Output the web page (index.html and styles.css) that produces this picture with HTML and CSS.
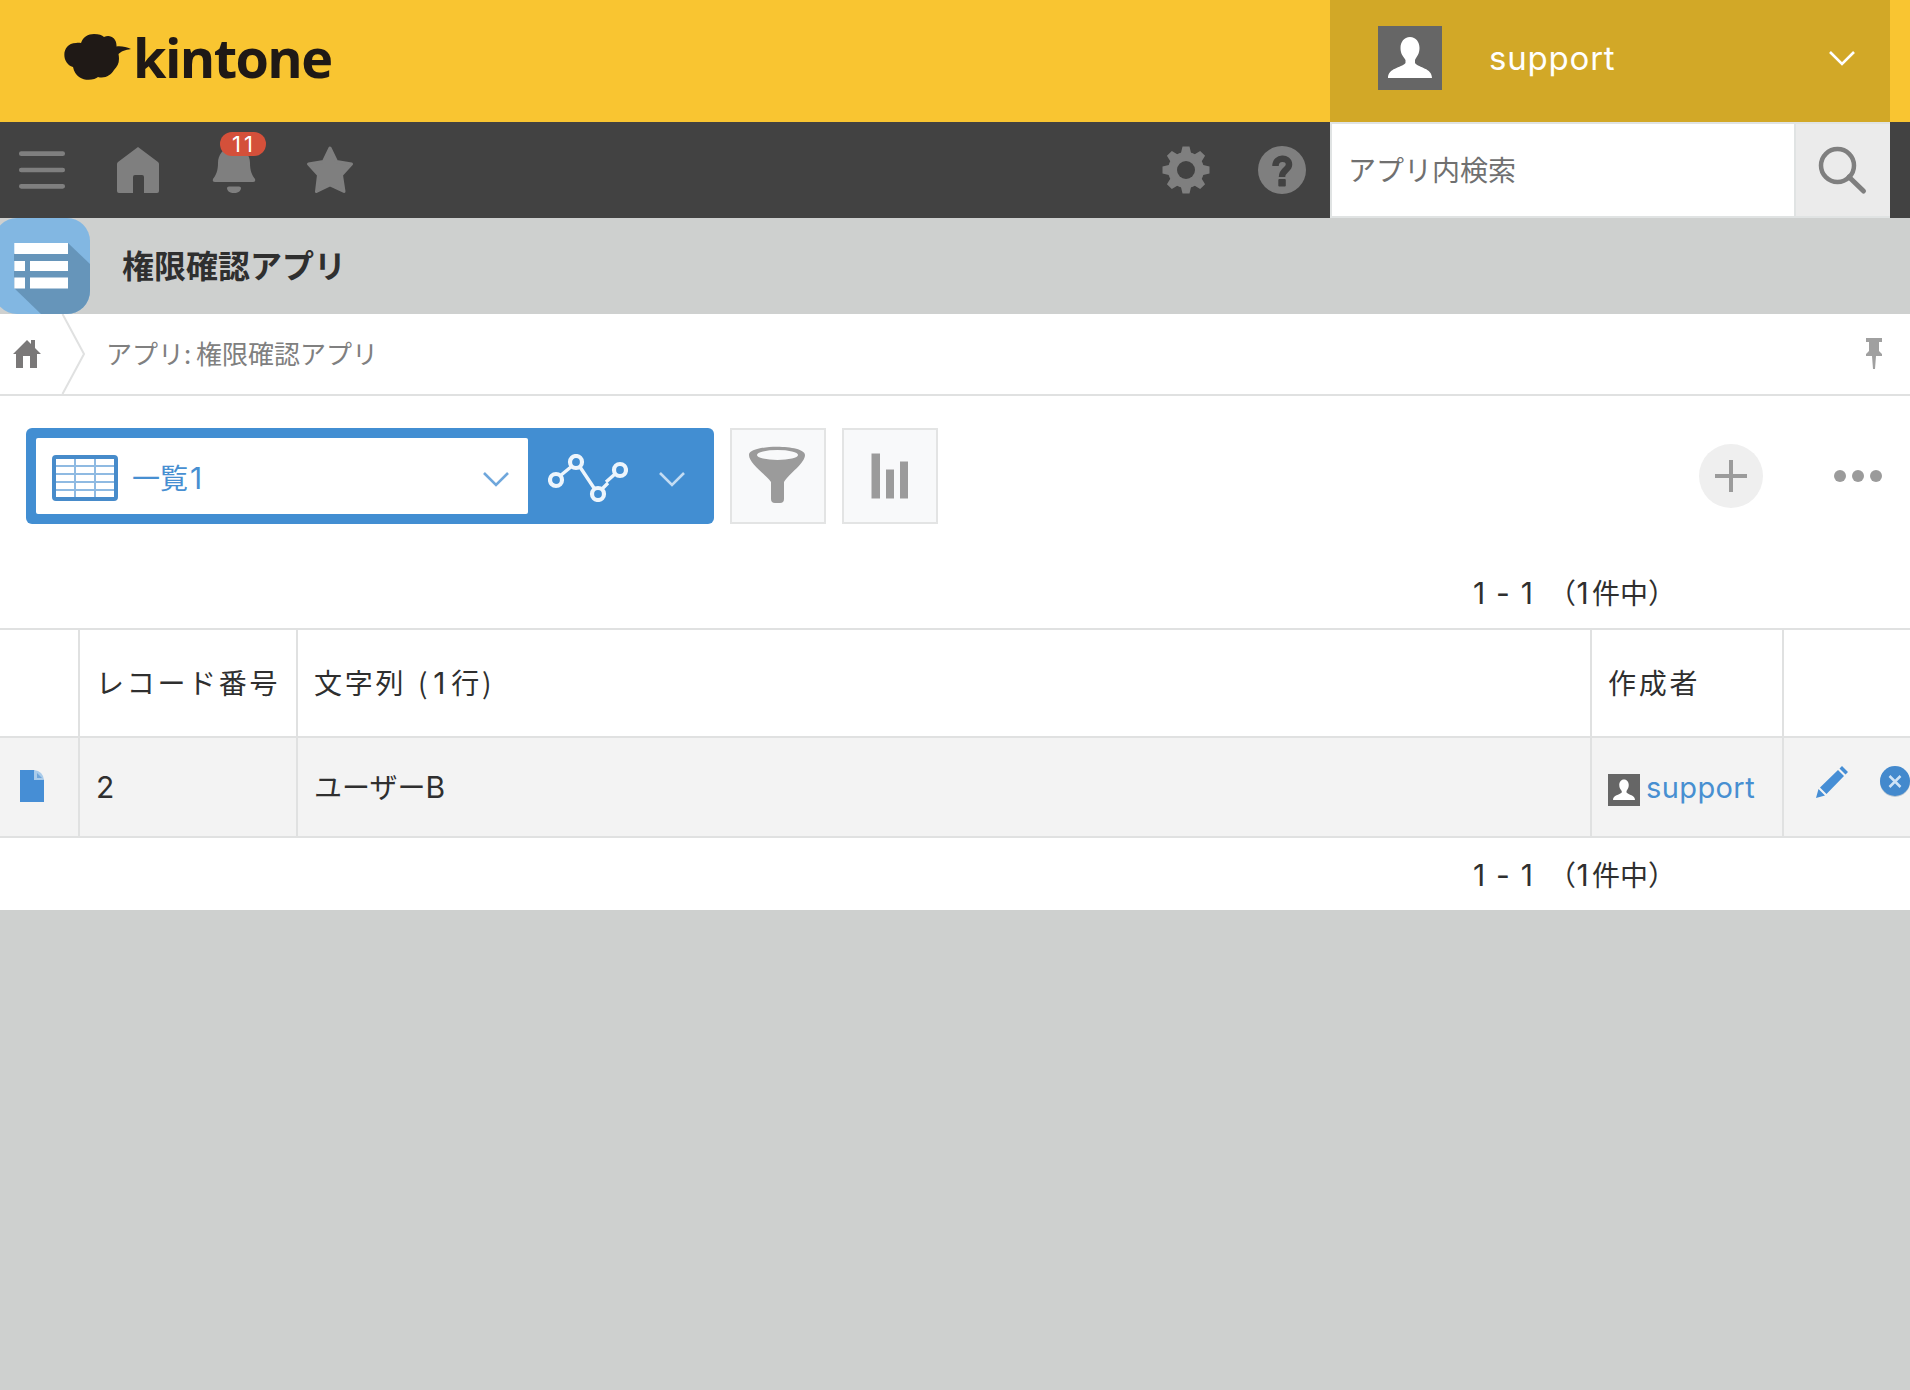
FILE: index.html
```html
<!DOCTYPE html>
<html lang="ja">
<head>
    <meta charset="UTF-8">
    <meta name="viewport" content="width=device-width, initial-scale=1.0">
    <title>権限確認アプリ</title>
    <link rel="stylesheet" href="styles.css">
</head>
<body>
    <!-- Header -->
    <header class="header">
        <div class="logo">
            <svg width="68" height="48" viewBox="0 0 68 48">
                <path d="M17 10C19 4 24 1 30 1C35 1 38 2 40 4C46 1 53 5 52.500 13.500C58 13 62 14 67 16C61 17 58 18 54.500 21C56 29 54 33 50 37C47 42 41 46 34 44C30 48 12 50 9 34C-3 31 -3 10 12 10C14 9.500 15 9.500 17 10Z" fill="#1f1916"/>
            </svg>
            <span class="logo-text">kintone</span>
        </div>
        <div class="user">
            <svg class="avatar" viewBox="0 0 64 64">
                <rect width="64" height="64" fill="#666"/>
                <path d="M32 11C26 11 22.500 16 22.500 22C22.500 28 25 30 27.500 34V37C23 42 10 42 10 52H54C54 42 41 42 37 37V34C39 30 41.500 28 41.500 22C41.500 16 38 11 32 11Z" fill="#fff"/>
            </svg>
            <span class="user-name">support</span>
            <svg class="user-arrow" width="26" height="18" viewBox="0 0 26 18"><path d="M1 2L13 14L25 2" fill="none" stroke="#fff" stroke-width="2.600"/></svg>
        </div>
    </header>

    <!-- Navigation bar -->
    <nav class="nav">
        <div class="nav-icon">
            <svg viewBox="0 0 96 96"><path d="M21.300 31.700H62.700M21.300 48H62.700M21.300 64.300H62.700" stroke="#7f7f7f" stroke-width="4.700" stroke-linecap="round"/></svg>
        </div>
        <div class="nav-icon">
            <svg viewBox="0 0 96 96"><path d="M48 25L68 40Q69 41 69 42V69Q69 71 67 71H54V55Q54 53 52 53H45Q43 53 43 55V71H29Q27 71 27 69V42Q27 41 28 40Z" fill="#7f7f7f"/></svg>
        </div>
        <div class="nav-icon">
            <svg viewBox="0 0 96 96"><path d="M48 25C37 25 32 33 32 41C32 49 30 53 27 57Q26 60 29 60H67Q70 60 69 57C66 53 64 49 64 41C64 33 59 25 48 25ZM43 64.500H53Q55 64.500 55 66C55 69 52 71 48 71C44 71 41 69 41 66Q41 64.500 43 64.500Z" fill="#7f7f7f"/></svg>
            <span class="badge">11</span>
        </div>
        <div class="nav-icon">
            <svg viewBox="0 0 96 96"><path d="M48 26L54.500 39.500L69.500 42L59.500 53L62 69.500L48 63L34.500 69.500L36.500 53L26.500 42L41.500 39.500Z" fill="#7f7f7f" stroke="#7f7f7f" stroke-width="3" stroke-linejoin="round"/></svg>
        </div>
        <div class="nav-icon nav-right">
            <svg viewBox="0 0 96 96">
                <g fill="#7f7f7f">
                    <circle cx="48" cy="48" r="18"/>
                    <path id="teeth" d="M44.500 24.500H51.500L53.500 33H42.500ZM44.500 71.500H51.500L53.500 63H42.500Z"/>
                    <use href="#teeth" transform="rotate(45 48 48)"/>
                    <use href="#teeth" transform="rotate(90 48 48)"/>
                    <use href="#teeth" transform="rotate(135 48 48)"/>
                </g>
                <circle cx="48" cy="48" r="9" fill="#424242"/>
            </svg>
        </div>
        <div class="nav-icon">
            <svg viewBox="0 0 96 96"><circle cx="48" cy="48" r="24" fill="#7f7f7f"/><path d="M41.500 44C41.500 34.500 55 34.500 55 42.500C55 48 48 47.500 48 55" fill="none" stroke="#424242" stroke-width="6.500"/><rect x="44.300" y="57" width="7.500" height="7.500" rx="1" fill="#424242"/></svg>
        </div>
        <div class="search">
            <input class="search-input" type="text" placeholder="アプリ内検索">
            <div class="search-button">
                <svg viewBox="0 0 96 96"><circle cx="43.500" cy="43.500" r="16.500" fill="none" stroke="#7f7f7f" stroke-width="4.500"/><path d="M55 55L69.500 69" stroke="#7f7f7f" stroke-width="5" stroke-linecap="round"/></svg>
            </div>
        </div>
    </nav>

    <!-- App title -->
    <div class="app-title">
        <svg class="app-icon" width="96" height="96" viewBox="0 0 96 96">
            <defs><clipPath id="round"><rect width="96" height="96" rx="23"/></clipPath></defs>
            <g clip-path="url(#round)">
                <rect width="96" height="96" fill="#82b7e2"/>
                <path d="M74 25L96 46V96H47L20 70V35Z" fill="#6695ba"/>
            </g>
            <path d="M20.300 25H74V36H20.300ZM20.300 43H31V53H20.300ZM36 43H74V53H36ZM20.300 59.600H31V70.400H20.300ZM36 59.600H74V70.400H36Z" fill="#fff"/>
        </svg>
        <h1>権限確認アプリ</h1>
    </div>

    <main class="content">
        <div class="breadcrumb">
            <svg width="90" height="80" viewBox="0 0 90 80">
                <path d="M27 26L31 30V26H35V34L41 40H37V54H30V42H23V54H16V40H13Z" fill="#7a7878"/>
                <path d="M62.500 0L84 40L62.500 80" fill="none" stroke="#e0e1e1" stroke-width="2"/>
            </svg>
            <span class="breadcrumb-text">アプリ: 権限確認アプリ</span>
            <svg class="pin" width="16" height="32" viewBox="0 0 16 32"><path d="M0 0H16V4H13V13L16 16V18H10L9 31H7L6 18H0V16L3 13V4H0Z" fill="#a0a0a0"/></svg>
        </div>

        <div class="toolbar">
            <div class="view-bar">
                <div class="view-select">
                    <svg width="66" height="46" viewBox="0 0 66 46">
                        <path d="M2 11H64M2 19H64M2 27H64M2 35H64M23 2V44M43 2V44" stroke="#8fbae2" stroke-width="2"/>
                        <rect x="2" y="2" width="62" height="42" rx="2" fill="none" stroke="#478bca" stroke-width="4"/>
                    </svg>
                    <span class="view-name">一覧<span>1</span></span>
                    <svg class="view-arrow" width="26" height="18" viewBox="0 0 26 18"><path d="M1 2L13 14L25 2" fill="none" stroke="#6fa7dc" stroke-width="2.600"/></svg>
                </div>
                <div class="graph-select">
                    <svg width="80" height="48" viewBox="0 0 80 48">
                        <path d="M12.500 21.500L23.500 12.500M32 13L46 34M54 35L60 29M58 28L67 20" stroke="#edf5fc" stroke-width="3.400"/>
                        <g fill="none" stroke="#edf5fc" stroke-width="4.200"><circle cx="8" cy="26" r="6"/><circle cx="28" cy="8" r="6"/><circle cx="50" cy="40" r="6"/><circle cx="72" cy="16" r="6"/></g>
                    </svg>
                    <svg width="26" height="18" viewBox="0 0 26 18"><path d="M1 2L13 14L25 2" fill="none" stroke="#c3dcf3" stroke-width="2.600"/></svg>
                </div>
            </div>
            <div class="tool-button">
                <svg width="92" height="92" viewBox="0 0 92 92"><path d="M17 25C17 14 73 14 73 25C73 33 58 43 52 52V69Q52 73 48 73H43Q39 73 39 69V52C32 43 17 33 17 25Z" fill="#9b9b9b"/><ellipse cx="45.500" cy="25" rx="20.500" ry="5" fill="#f8f9fa"/></svg>
            </div>
            <div class="tool-button">
                <svg width="92" height="92" viewBox="0 0 92 92"><path d="M27.500 23.500H36V68.500H27.500ZM42 39.500H50V68.500H42ZM56 31.500H64V68.500H56Z" fill="#9b9b9b"/></svg>
            </div>
            <div class="add-button">
                <svg width="64" height="64" viewBox="0 0 64 64"><path d="M16 32H48M32 16V48" stroke="#9b9b9b" stroke-width="4"/></svg>
            </div>
            <svg class="more" width="48" height="12" viewBox="0 0 48 12" fill="#9b9b9b"><circle cx="6" cy="6" r="6"/><circle cx="24" cy="6" r="6"/><circle cx="42" cy="6" r="6"/></svg>
        </div>

        <div class="pager pager-top"><span class="range">1 - 1</span><span class="total">（<span class="num">1</span>件中）</span></div>

        <table class="records">
            <colgroup>
                <col class="col-detail"><col class="col-number"><col class="col-text"><col class="col-creator"><col class="col-action">
            </colgroup>
            <tr class="records-head">
                <th></th>
                <th>レコード番号</th>
                <th>文字列 (<span class="num">1</span>行)</th>
                <th>作成者</th>
                <th></th>
            </tr>
            <tr class="records-row">
                <td>
                    <svg class="file" width="24" height="32" viewBox="0 0 24 32"><path d="M0 0H14L24 10V32H0Z" fill="#468ed5"/><path d="M14 0Q23 1 24 10H14Z" fill="#a9cbea"/><path d="M17 3L22 8H17Z" fill="#6fa5da"/></svg>
                </td>
                <td><span class="latin">2</span></td>
                <td>ユーザー<span class="latin">B</span></td>
                <td>
                    <div class="creator">
                        <svg width="32" height="32" viewBox="0 0 64 64">
                            <rect width="64" height="64" fill="#666"/>
                            <path d="M32 11C26 11 22.500 16 22.500 22C22.500 28 25 30 27.500 34V37C23 42 10 42 10 52H54C54 42 41 42 37 37V34C39 30 41.500 28 41.500 22C41.500 16 38 11 32 11Z" fill="#fff"/>
                        </svg>
                        <span>support</span>
                    </div>
                </td>
                <td>
                    <div class="actions">
                        <svg width="32" height="32" viewBox="0 0 32 32"><path d="M0 32L2.500 23L9 29.500ZM4 21.500L22 4L28 10L10.500 28ZM23.500 2.500L26 0L32 6L29.500 8.500Z" fill="#468ed5"/></svg>
                        <svg width="30" height="32" viewBox="0 0 30 32"><circle cx="15" cy="16" r="15" fill="#b9c6d2"/><circle cx="15" cy="15" r="15" fill="#4389cd"/><path d="M9.500 10L20.500 21M20.500 10L9.500 21" stroke="#cfe3f6" stroke-width="2.500"/></svg>
                    </div>
                </td>
            </tr>
        </table>

        <div class="pager pager-bottom"><span class="range">1 - 1</span><span class="total">（<span class="num">1</span>件中）</span></div>
    </main>
</body>
</html>
```
FILE: styles.css
```css
* {
    box-sizing: border-box;
}

body {
    margin: 0;
    padding: 0;
    background-color: #ced0cf;
    color: #2f2f2f;
    font-family: "Noto Sans CJK JP", sans-serif;
    font-size: 28px;
    line-height: 40px;
    overflow-x: hidden;
}

svg {
    display: block;
    flex: none;
}

.header {
    display: flex;
    justify-content: space-between;
    height: 122px;
    padding-right: 20px;
    background-color: #f9c531;
}

.logo {
    display: flex;
    align-items: center;
    padding: 0 0 8px 64px;
}

.logo-text {
    margin-left: 1px;
    color: #1f1916;
    font-family: "Open Sans", "Noto Sans", sans-serif;
    font-size: 54px;
    font-weight: 700;
    letter-spacing: -1.6px;
}

.user {
    display: flex;
    align-items: center;
    width: 560px;
    padding: 0 35px 6px 48px;
    background-color: #d2a827;
    color: #fff;
}

.avatar {
    width: 64px;
    height: 64px;
}

.user-name {
    flex: 1;
    margin-left: 47px;
    font-family: Inter, sans-serif;
    font-size: 33px;
    letter-spacing: 0.8px;
}

.user-arrow {
    margin-top: 2px;
}

.nav {
    display: flex;
    height: 96px;
    padding-right: 20px;
    background-color: #424242;
}

.nav-icon {
    position: relative;
    width: 96px;
    height: 96px;
}

/* the first cell is narrower, so the icons sit on 96px centers from 42px */
.nav-icon:first-child {
    width: 90px;
}

.nav-icon svg {
    width: 96px;
    height: 96px;
}

.nav-right {
    margin-left: auto;
}

.badge {
    position: absolute;
    top: 10px;
    left: 34px;
    width: 46px;
    height: 24px;
    padding-left: 2px;
    border-radius: 12px;
    background-color: #d4503a;
    color: #fff;
    font-family: Inter, sans-serif;
    font-size: 22px;
    line-height: 24px;
    letter-spacing: 3px;
    text-align: center;
}

.search {
    display: flex;
    width: 560px;
}

.search-input {
    width: 466px;
    padding: 0 0 2px 16px;
    border: 2px solid #e0e3e3;
    border-radius: 0;
    background-color: #fff;
    font-family: "Noto Sans CJK JP", sans-serif;
    font-size: 28px;
}

.search-input::placeholder {
    color: #707070;
}

.search-button {
    width: 94px;
    height: 96px;
    border: solid #e0e3e3;
    border-width: 2px 0;
    background-color: #ebebeb;
}

.search-button svg {
    margin: -2px 0 0 -2px;
    width: 96px;
}

.app-title {
    display: flex;
    align-items: center;
    height: 96px;
}

.app-icon {
    margin-left: -6px;
}

.app-title h1 {
    margin: 0 0 4px 32px;
    font-size: 32px;
    font-weight: 700;
}

.content {
    height: 596px;
    background-color: #fff;
}

.breadcrumb {
    display: flex;
    align-items: center;
    height: 82px;
    padding-right: 28px;
    border-bottom: 2px solid #e0e1e1;
}

.breadcrumb-text {
    flex: 1;
    margin-left: 16px;
    padding-bottom: 2px;
    color: #808080;
    font-size: 26px;
    word-spacing: -1px;
}

.toolbar {
    display: flex;
    align-items: center;
    gap: 16px;
    height: 160px;
    padding: 0 28px 0 26px;
}

.view-bar {
    display: flex;
    width: 688px;
    height: 96px;
    padding: 10px 0 10px 10px;
    border-radius: 6px;
    background-color: #428ed2;
}

.view-select {
    display: flex;
    align-items: center;
    width: 492px;
    padding: 4px 19px 0 16px;
    border-radius: 2px;
    background-color: #fff;
}

.view-name {
    flex: 1;
    margin-left: 14px;
    padding-bottom: 2px;
    color: #478fd1;
}

.view-name span {
    margin-left: 2px;
    font-family: Inter, sans-serif;
    font-size: 30px;
}

.view-arrow {
    margin-top: 4px;
}

.graph-select {
    display: flex;
    align-items: center;
    gap: 31px;
    padding: 4px 0 0 20px;
}

.graph-select svg:last-child {
    margin-top: 4px;
}

.tool-button {
    width: 96px;
    height: 96px;
    border: 2px solid #e3e4e4;
    background-color: #f8f9fa;
}

.add-button {
    margin-left: auto;
    border-radius: 50%;
    background-color: #efefef;
}

.more {
    margin-left: 55px;
}

.pager {
    display: flex;
    padding-left: 1473px;
}

.pager-top {
    height: 72px;
    padding-top: 17px;
}

.pager-bottom {
    padding-top: 17px;
}

.range {
    width: 75px;
    font-family: Inter, sans-serif;
    font-size: 30px;
    letter-spacing: 1.2px;
    white-space: pre;
}

.total {
    margin-top: -1px;
}

.num {
    display: inline-block;
    width: 16px;
    font-family: Inter, sans-serif;
    font-size: 30px;
    letter-spacing: 0;
    text-align: center;
}

.total .num {
    text-indent: -3px;
}

.records {
    width: 1912px;
    table-layout: fixed;
    border-collapse: separate;
    border-spacing: 0;
    border-top: 2px solid #e0e1e1;
}

.col-detail {
    width: 80px;
}

.col-number {
    width: 218px;
}

.col-text {
    width: 1294px;
}

.col-creator {
    width: 192px;
}

.records th,
.records td {
    padding: 0 0 2px 16px;
    border: solid #e0e1e1;
    border-width: 0 2px 2px 0;
    text-align: left;
    font-weight: 400;
    white-space: nowrap;
}

.records th {
    height: 108px;
    letter-spacing: 2.7px;
    word-spacing: 3px;
}

.records th .num {
    margin: 0 4px 0 1px;
}

.records td {
    height: 100px;
    background-color: #f3f3f3;
}

.records td:first-child {
    padding-left: 20px;
}

.file {
    margin-bottom: 1px;
}

.latin {
    font-family: Inter, sans-serif;
    font-size: 30px;
}

.creator {
    display: flex;
    align-items: center;
    gap: 6px;
    padding-top: 7px;
    color: #478fd1;
    font-family: Inter, sans-serif;
    font-size: 29px;
    letter-spacing: 0.4px;
}

.creator span {
    margin-top: -4px;
}

.actions {
    display: flex;
    gap: 32px;
    padding: 0 0 9px 16px;
}
```
